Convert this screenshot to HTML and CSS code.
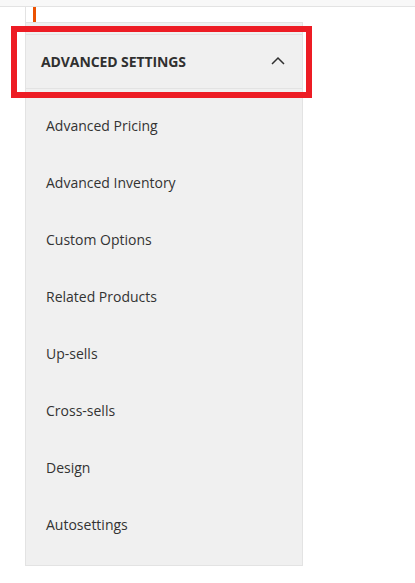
FILE: index.html
```html
<!DOCTYPE html>
<html lang="en">
<head>
<meta charset="utf-8">
<title>Advanced Settings</title>
<link rel="stylesheet" href="styles.css">
</head>
<body>
<div class="top-strip"></div>
<div class="gap">
  <div class="accent"></div>
</div>
<section class="panel">
  <div class="panel-header">
    <span class="panel-title">Advanced Settings</span>
    <svg class="chevron" width="14" height="9" viewBox="0 0 14 9" aria-hidden="true">
      <path d="M1 8 L7 2 L13 8" fill="none" stroke="#303030" stroke-width="1.5"/>
    </svg>
  </div>
  <ul class="menu">
    <li class="menu-item">Advanced Pricing</li>
    <li class="menu-item">Advanced Inventory</li>
    <li class="menu-item">Custom Options</li>
    <li class="menu-item">Related Products</li>
    <li class="menu-item">Up-sells</li>
    <li class="menu-item">Cross-sells</li>
    <li class="menu-item">Design</li>
    <li class="menu-item">Autosettings</li>
  </ul>
</section>
<div class="highlight"></div>
</body>
</html>
```
FILE: styles.css
```css
html, body {
  margin: 0;
  padding: 0;
  background: #ffffff;
  font-family: "Open Sans", "Liberation Sans", sans-serif;
}

.top-strip {
  height: 6px;
  background: #f8f8f8;
  border-bottom: 1px solid #e3e3e3;
}

.gap {
  margin-left: 25px;
  border-left: 1px solid #e3e3e3;
  padding-left: 7px;
  height: 15px;
}

.accent {
  width: 3px;
  height: 15px;
  background: #eb5202;
}

.panel {
  margin-left: 25px;
  width: 278px;
  box-sizing: border-box;
  border: 1px solid #e3e3e3;
  background: #f0f0f0;
  padding-top: 11px;
  padding-bottom: 12px;
}

.panel-header {
  display: flex;
  align-items: center;
  justify-content: space-between;
  height: 53px;
  border-top: 1px solid #e3e3e3;
  border-bottom: 1px solid #e3e3e3;
  padding: 0 17px 0 15px;
}

.panel-title {
  font-size: 14px;
  line-height: 19px;
  font-weight: 700;
  text-transform: uppercase;
  color: #303030;
  letter-spacing: -0.1px;
  margin-top: -1px;
}

.chevron {
  display: block;
  margin-top: -2px;
}

.menu {
  list-style: none;
  margin: 0;
  padding: 8px 0 0 0;
}

.menu-item {
  height: 57px;
  box-sizing: border-box;
  padding: 19px 0 19px 20px;
  font-size: 14px;
  line-height: 19px;
  color: #333333;
}

.highlight {
  position: absolute;
  left: 11px;
  top: 26px;
  width: 301px;
  height: 72px;
  box-sizing: border-box;
  border: 6px solid #ed1c24;
}
```
